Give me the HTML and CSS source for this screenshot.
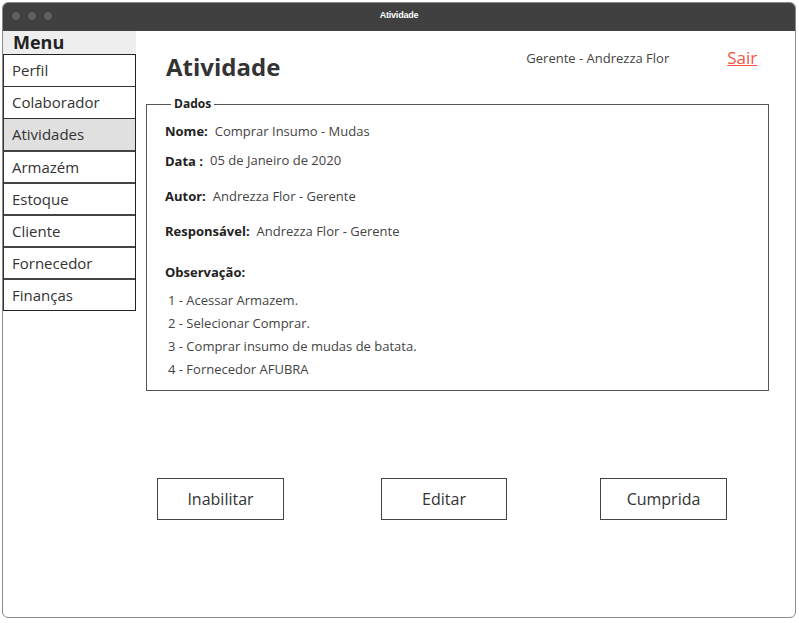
FILE: index.html
```html
<!DOCTYPE html>
<html lang="pt">
<head>
<meta charset="utf-8">
<title>Atividade</title>
<link rel="stylesheet" href="styles.css">
</head>
<body>
<div class="window">
  <div class="titlebar">
    <div class="dots"><span></span><span></span><span></span></div>
    <div class="wtitle">Atividade</div>
  </div>
  <div class="content">
    <nav class="sidebar">
      <div class="menu-head">Menu</div>
      <ul class="menu">
        <li class="item">Perfil</li>
        <li class="item">Colaborador</li>
        <li class="item active">Atividades</li>
        <li class="item thick">Armazém</li>
        <li class="item thick">Estoque</li>
        <li class="item thick">Cliente</li>
        <li class="item thick">Fornecedor</li>
        <li class="item thick">Finanças</li>
      </ul>
    </nav>
    <main class="main">
      <div class="header">
        <h1 class="title">Atividade</h1>
        <div class="user">Gerente - Andrezza Flor</div>
        <a class="logout" href="#">Sair</a>
      </div>
      <fieldset class="data">
        <legend>Dados</legend>
        <div class="row r-nome"><span class="lbl">Nome:</span><span class="val">Comprar Insumo - Mudas</span></div>
        <div class="row r-data"><span class="lbl">Data :</span><span class="val">05 de Janeiro de 2020</span></div>
        <div class="row r-autor"><span class="lbl">Autor:</span><span class="val">Andrezza Flor - Gerente</span></div>
        <div class="row r-resp"><span class="lbl">Responsável:</span><span class="val">Andrezza Flor - Gerente</span></div>
        <div class="row r-obs"><span class="lbl">Observação:</span></div>
        <ol class="steps">
          <li>1 - Acessar Armazem.</li>
          <li>2 - Selecionar Comprar.</li>
          <li>3 - Comprar insumo de mudas de batata.</li>
          <li>4 - Fornecedor AFUBRA</li>
        </ol>
      </fieldset>
      <div class="actions">
        <button class="btn">Inabilitar</button>
        <button class="btn">Editar</button>
        <button class="btn">Cumprida</button>
      </div>
    </main>
  </div>
</div>
</body>
</html>
```
FILE: styles.css
```css
* { box-sizing: border-box; }
html, body { margin: 0; padding: 0; background: #fff; }
body { font-family: "Open Sans", "Noto Sans", sans-serif; color: #333; }

.window {
  margin: 2px 0 0 2px;
  width: 794px;
  height: 616px;
  border: 1px solid #8a8a8a;
  border-radius: 6px;
  overflow: hidden;
  display: flex;
  flex-direction: column;
}
.titlebar {
  height: 28px;
  background: #404040;
  position: relative;
  display: flex;
  align-items: center;
  justify-content: center;
  flex: none;
}
.dots { position: absolute; left: 9px; top: 9px; display: flex; gap: 8px; }
.dots span { width: 8px; height: 8px; border-radius: 50%; background: #5e5e5e; display: block; }
.wtitle { color: #fff; font-size: 9px; font-weight: 700; font-family: "Liberation Sans", sans-serif; letter-spacing: -0.2px; margin-top: -4px; }

.content { flex: 1; display: flex; min-height: 0; }

.sidebar { width: 133px; flex: none; }
.menu-head {
  height: 23px;
  background: #eeeeee;
  font-weight: 700;
  font-size: 18px;
  line-height: 23px;
  padding-left: 10px;
  color: #222;
}
.menu { list-style: none; margin: 0; padding: 0; border: 1px solid #222; border-left: 1px solid #333; }
.item {
  height: 32px;
  line-height: 31px;
  font-size: 15px;
  padding-left: 8px;
  color: #333;
  border-top: 1px solid #333;
}
.item:first-child { border-top: none; height: 31px; }
.item.active { background: #e0e0e0; }
.item.thick { border-top: 2px solid #444; height: 32px; line-height: 30px; }

.main { flex: 1; min-width: 0; padding: 0 0 0 10px; display: flex; flex-direction: column; }
.header { display: flex; align-items: flex-start; height: 66px; }
.title { margin: 21px 0 0 20px; font-size: 24px; font-weight: 700; color: #333; line-height: 30px; }
.user { margin: 19px 0 0 246px; font-size: 13px; color: #444; line-height: 17px; }
.logout { margin: 17px 0 0 58px; font-size: 17px; color: #f5553f; line-height: 20px; text-decoration: underline; }

.data {
  margin: 0;
  padding: 0 10px 0 18px;
  border: 1px solid #555;
  width: 623px;
  height: 294px;
  min-width: 0;
}
.data legend { font-size: 12px; font-weight: 700; color: #222; padding: 0 3px; margin-left: 6px; line-height: 14px; }
.row { font-size: 13px; line-height: 18px; display: flex; gap: 7px; }
.lbl { font-weight: 700; color: #222; }
.val { color: #444; }
.r-nome { margin-top: 11px; }
.r-data { margin-top: 12px; }
.r-data .val { position: relative; top: -1px; }
.r-autor { margin-top: 17px; }
.r-resp { margin-top: 17px; }
.r-obs { margin-top: 23px; }
.steps { list-style: none; margin: 8px 0 0 3px; padding: 0; font-size: 13px; line-height: 23px; color: #444; }

.actions { display: flex; gap: 97px; padding-left: 11px; margin-top: 87px; }
.btn {
  flex: none;
  width: 127px;
  height: 42px;
  border: 1px solid #444;
  background: #fff;
  font-family: inherit;
  font-size: 16px;
  color: #333;
  padding: 0;
}
.btn:nth-child(2) { width: 126px; margin-right: -4px; }
```
